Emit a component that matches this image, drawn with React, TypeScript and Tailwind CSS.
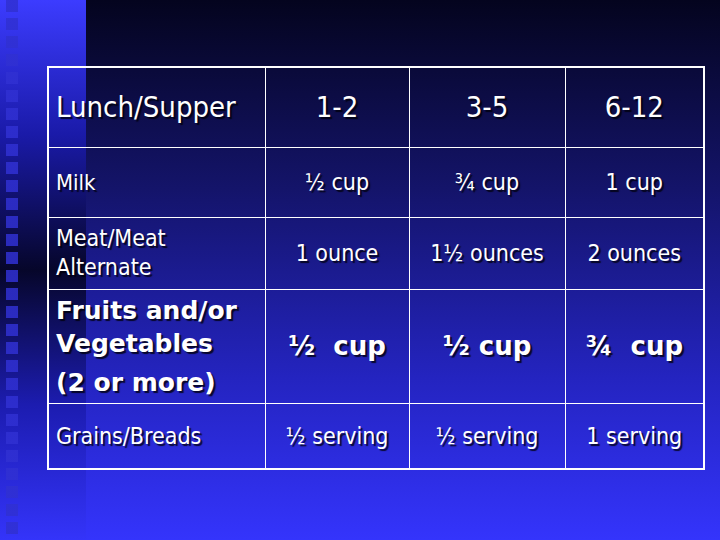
const font = "font-['DejaVu_Sans_Condensed','DejaVu_Sans',Verdana,sans-serif]";
const boldFont = "font-['DejaVu_Sans',Verdana,sans-serif]";
const shadow = "[text-shadow:2px_2px_1px_rgba(0,0,10,0.8)]";

type Row = {
  label: React.ReactNode;
  values: string[];
  height: string;
  labelClass: string;
  valueClass: string;
};

const rows: Row[] = [
  {
    label: "Lunch/Supper",
    values: ["1-2", "3-5", "6-12"],
    height: "h-[80px]",
    labelClass: "text-[29px]",
    valueClass: "text-[29px]",
  },
  {
    label: "Milk",
    values: ["½ cup", "¾ cup", "1 cup"],
    height: "h-[70px]",
    labelClass: "text-[22px]",
    valueClass: "text-[23px]",
  },
  {
    label: (
      <>
        Meat/Meat
        <br />
        Alternate
      </>
    ),
    values: ["1 ounce", "1½ ounces", "2 ounces"],
    height: "h-[72px]",
    labelClass: "text-[23px] leading-[29px]",
    valueClass: "text-[23px]",
  },
  {
    label: (
      <>
        <p className="leading-[33px]">Fruits and/or Vegetables</p>
        <p className="leading-[33px] mt-[6px]">(2 or more)</p>
      </>
    ),
    values: ["½\u00a0\u00a0cup", "½ cup", "¾\u00a0\u00a0cup"],
    height: "h-[114px]",
    labelClass: `text-[25px] font-bold ${boldFont}`,
    valueClass: `text-[26px] font-bold ${boldFont}`,
  },
  {
    label: "Grains/Breads",
    values: ["½ serving", "½ serving", "1 serving"],
    height: "h-[66px]",
    labelClass: "text-[23px]",
    valueClass: "text-[23px]",
  },
];

export default function App() {
  return (
    <div
      className={`w-[720px] h-[540px] overflow-hidden text-white ${font} [background:repeating-linear-gradient(to_bottom,rgba(48,48,210,0.85)_0_12px,transparent_12px_18px)_6px_0/12px_100%_no-repeat,linear-gradient(to_bottom,#3c3cff_0%,#1a1aa8_25%,#06062a_50%,#1c1cb0_75%,#3434fa_100%)_0_0/86px_100%_no-repeat,linear-gradient(to_bottom,#04041e_0%,#14146a_35%,#2424c0_70%,#3434fc_100%)]`}
    >
      <div className="pt-[66px] pl-[47px]">
        <table className="border-collapse border-2 border-white w-[656px] table-fixed">
          <colgroup>
            <col className="w-[217px]" />
            <col className="w-[144px]" />
            <col className="w-[156px]" />
            <col className="w-[139px]" />
          </colgroup>
          <tbody>
            {rows.map((row, i) => (
              <tr key={i} className={row.height}>
                <td className={`border-[1.5px] border-white pl-[7px] pr-1 align-middle ${shadow} ${row.labelClass}`}>
                  {row.label}
                </td>
                {row.values.map((v, j) => (
                  <td
                    key={j}
                    className={`border-[1.5px] border-white text-center align-middle whitespace-pre ${shadow} ${row.valueClass}`}
                  >
                    {v}
                  </td>
                ))}
              </tr>
            ))}
          </tbody>
        </table>
      </div>
    </div>
  );
}
